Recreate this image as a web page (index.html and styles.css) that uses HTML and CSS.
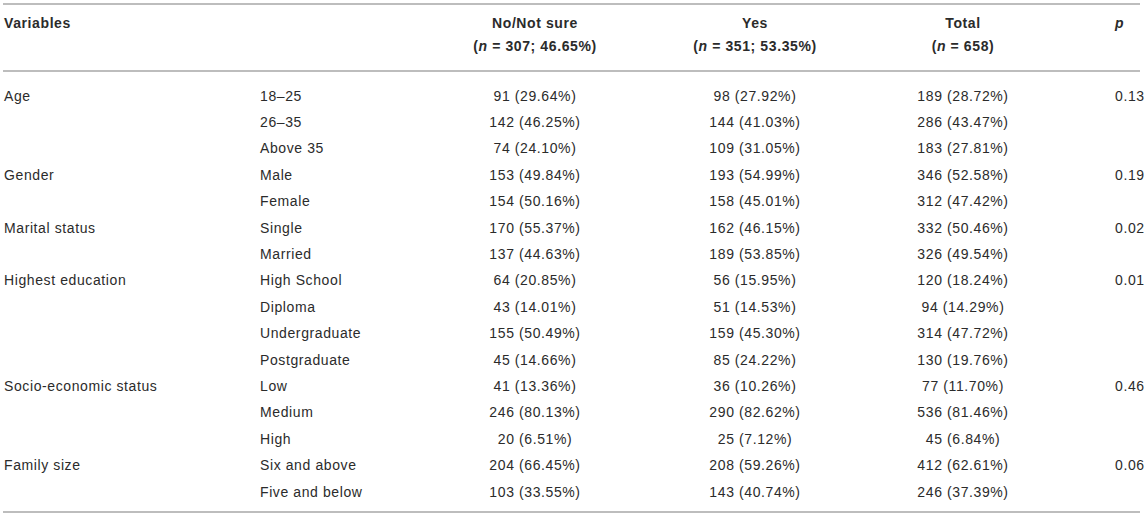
FILE: index.html
```html
<!DOCTYPE html>
<html lang="en">
<head>
<meta charset="utf-8">
<title>Table</title>
<link rel="stylesheet" href="styles.css">
</head>
<body>
<table class="data">
  <colgroup>
    <col class="c-var"><col class="c-cat"><col class="c-no"><col class="c-yes"><col class="c-tot"><col class="c-p">
  </colgroup>
  <thead>
    <tr>
      <th class="left">Variables</th>
      <th class="left"></th>
      <th>No/Not sure<br>(<i>n</i> = 307; 46.65%)</th>
      <th>Yes<br>(<i>n</i> = 351; 53.35%)</th>
      <th>Total<br>(<i>n</i> = 658)</th>
      <th class="pcol"><i>p</i></th>
    </tr>
  </thead>
  <tbody>
    <tr class="first"><td class="left">Age</td><td class="left">18–25</td><td>91 (29.64%)</td><td>98 (27.92%)</td><td>189 (28.72%)</td><td class="pcol">0.13</td></tr>
    <tr><td class="left"></td><td class="left">26–35</td><td>142 (46.25%)</td><td>144 (41.03%)</td><td>286 (43.47%)</td><td class="pcol"></td></tr>
    <tr><td class="left"></td><td class="left">Above 35</td><td>74 (24.10%)</td><td>109 (31.05%)</td><td>183 (27.81%)</td><td class="pcol"></td></tr>
    <tr><td class="left">Gender</td><td class="left">Male</td><td>153 (49.84%)</td><td>193 (54.99%)</td><td>346 (52.58%)</td><td class="pcol">0.19</td></tr>
    <tr><td class="left"></td><td class="left">Female</td><td>154 (50.16%)</td><td>158 (45.01%)</td><td>312 (47.42%)</td><td class="pcol"></td></tr>
    <tr><td class="left">Marital status</td><td class="left">Single</td><td>170 (55.37%)</td><td>162 (46.15%)</td><td>332 (50.46%)</td><td class="pcol">0.02</td></tr>
    <tr><td class="left"></td><td class="left">Married</td><td>137 (44.63%)</td><td>189 (53.85%)</td><td>326 (49.54%)</td><td class="pcol"></td></tr>
    <tr><td class="left">Highest education</td><td class="left">High School</td><td>64 (20.85%)</td><td>56 (15.95%)</td><td>120 (18.24%)</td><td class="pcol">0.01</td></tr>
    <tr><td class="left"></td><td class="left">Diploma</td><td>43 (14.01%)</td><td>51 (14.53%)</td><td>94 (14.29%)</td><td class="pcol"></td></tr>
    <tr><td class="left"></td><td class="left">Undergraduate</td><td>155 (50.49%)</td><td>159 (45.30%)</td><td>314 (47.72%)</td><td class="pcol"></td></tr>
    <tr><td class="left"></td><td class="left">Postgraduate</td><td>45 (14.66%)</td><td>85 (24.22%)</td><td>130 (19.76%)</td><td class="pcol"></td></tr>
    <tr><td class="left">Socio-economic status</td><td class="left">Low</td><td>41 (13.36%)</td><td>36 (10.26%)</td><td>77 (11.70%)</td><td class="pcol">0.46</td></tr>
    <tr><td class="left"></td><td class="left">Medium</td><td>246 (80.13%)</td><td>290 (82.62%)</td><td>536 (81.46%)</td><td class="pcol"></td></tr>
    <tr><td class="left"></td><td class="left">High</td><td>20 (6.51%)</td><td>25 (7.12%)</td><td>45 (6.84%)</td><td class="pcol"></td></tr>
    <tr><td class="left">Family size</td><td class="left">Six and above</td><td>204 (66.45%)</td><td>208 (59.26%)</td><td>412 (62.61%)</td><td class="pcol">0.06</td></tr>
    <tr class="last"><td class="left"></td><td class="left">Five and below</td><td>103 (33.55%)</td><td>143 (40.74%)</td><td>246 (37.39%)</td><td class="pcol"></td></tr>
  </tbody>
</table>
</body>
</html>
```

FILE: styles.css
```css
html, body {
  margin: 0;
  padding: 0;
  background: #ffffff;
}

body {
  padding: 3px 0 0 3px;
  font-family: "Liberation Sans", Arial, sans-serif;
  font-size: 14px;
  letter-spacing: 0.6px;
  color: #2b2b2b;
}

.data {
  width: 1137px;
  table-layout: fixed;
  border-collapse: separate;
  border-spacing: 0;
}

.c-var { width: 256px; }
.c-cat { width: 166px; }
.c-no { width: 220px; }
.c-yes { width: 220px; }
.c-tot { width: 196px; }
.c-p { width: 79px; }

.data th,
.data td {
  padding: 0;
  text-align: center;
  vertical-align: top;
  white-space: nowrap;
}

.data th {
  font-weight: bold;
  line-height: 23px;
  padding-top: 6.5px;
  padding-bottom: 12.5px;
  border-top: 2px solid #bdbdbd;
  border-bottom: 2px solid #bdbdbd;
}

.data th i,
.data td i {
  font-style: italic;
}

.data td {
  line-height: 26.4px;
}

.data .left {
  text-align: left;
  padding-left: 1px;
}

.data .pcol {
  text-align: left;
  padding-left: 54px;
}

.data tr.first td {
  padding-top: 10.5px;
}

.data tr.last td {
  padding-bottom: 6px;
  border-bottom: 2px solid #bdbdbd;
}
```
